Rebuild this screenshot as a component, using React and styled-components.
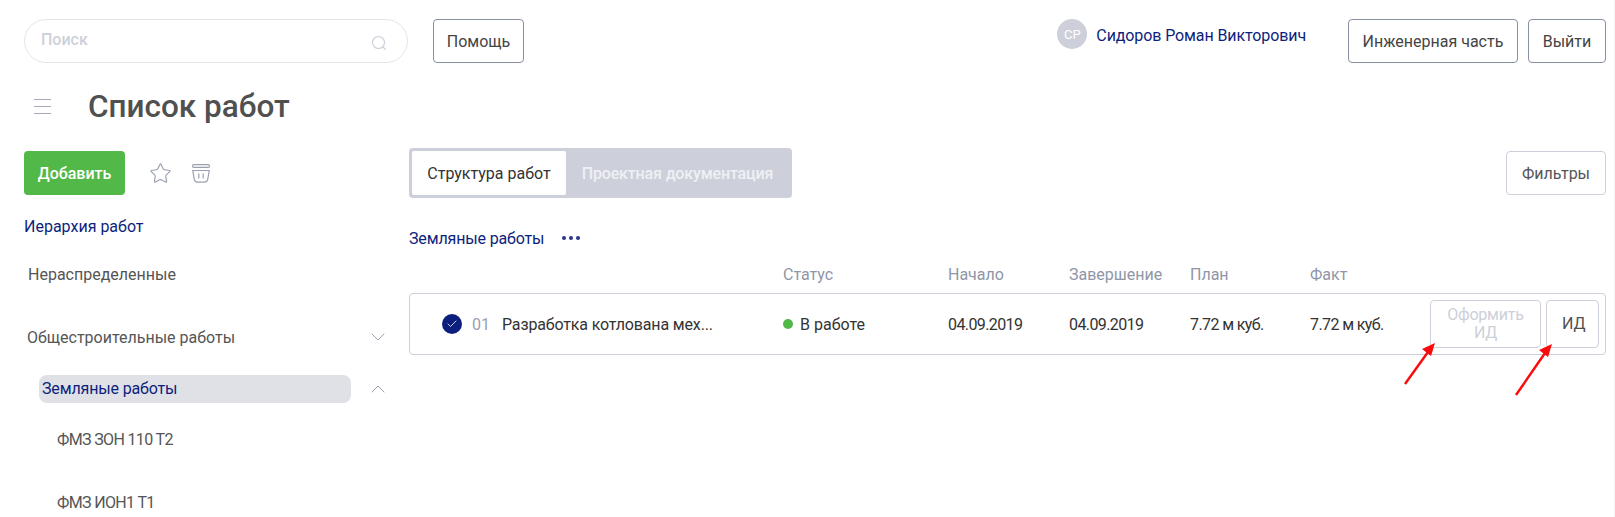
import React from 'react';
import styled, { createGlobalStyle } from 'styled-components';
import { Star, ChevronDown, ChevronUp, Check } from 'lucide-react';

const GlobalStyle = createGlobalStyle`
	html, body {
		margin: 0;
		background: #fff;
		overflow: hidden;
	}
	* {
		box-sizing: border-box;
	}
	#root {
		font-family: 'Roboto', 'Liberation Sans', sans-serif;
		font-size: 16px;
		color: #333;
	}
`;

const columns = [
	{ title: 'Статус', width: 165 },
	{ title: 'Начало', width: 121 },
	{ title: 'Завершение', width: 121 },
	{ title: 'План', width: 120 },
	{ title: 'Факт', width: 0 },
];

const App = () => {
	return (
		<Page>
			<GlobalStyle />
			<Header>
				<SearchBox>
					<SearchHint>Поиск</SearchHint>
					<svg width="16" height="16" viewBox="0 0 16 16" fill="none" stroke="#cdd0da" strokeWidth="1.2">
						<circle cx="7.5" cy="7.5" r="6" />
						<path d="M12 12l2.5 2.5" />
					</svg>
				</SearchBox>
				<Button $width={91}>Помощь</Button>
				<User>
					<Avatar>СР</Avatar>
					<UserName>Сидоров Роман Викторович</UserName>
				</User>
				<Button $width={170}>Инженерная часть</Button>
				<Button $width={78}>Выйти</Button>
			</Header>

			<TitleRow>
				<Burger>
					<BurgerLine />
					<BurgerLine />
					<BurgerLine />
				</Burger>
				<Title>Список работ</Title>
			</TitleRow>

			<Body>
				<Sidebar>
					<Actions>
						<AddButton>Добавить</AddButton>
						<Star size={23} color="#9aa0b0" strokeWidth={1.2} />
						<svg width="18" height="19" viewBox="0 0 18 19" fill="none" stroke="#9aa0b0" strokeWidth="1.2">
							<rect x="0.6" y="0.6" width="16.8" height="2.8" rx="1.2" />
							<path d="M0.8 6.5h16.4l-1.3 8.2c-.3 2-1.6 3.4-3.6 3.4H5.7c-2 0-3.3-1.4-3.6-3.4z" />
							<path d="M6.8 9.5v5M11.2 9.5v5" />
						</svg>
					</Actions>
					<HierarchyLink>Иерархия работ</HierarchyLink>
					<TreeItem $top={28} $left={4}>Нераспределенные</TreeItem>
					<TreeGroup>
						<span>Общестроительные работы</span>
						<ChevronDown size={24} color="#9aa0b0" strokeWidth={1} />
					</TreeGroup>
					<TreeSelectedRow>
						<TreeSelected>Земляные работы</TreeSelected>
						<ChevronUp size={24} color="#9aa0b0" strokeWidth={1} />
					</TreeSelectedRow>
					<TreeCode $top={27}>ФМЗ ЗОН 110 Т2</TreeCode>
					<TreeCode $top={43}>ФМЗ ИОН1 Т1</TreeCode>
				</Sidebar>

				<Main>
					<Toolbar>
						<Tabs>
							<Tab $active>Структура работ</Tab>
							<Tab>Проектная документация</Tab>
						</Tabs>
						<FilterButton>Фильтры</FilterButton>
					</Toolbar>
					<Crumbs>
						<span>Земляные работы</span>
						<Dots>
							<Dot />
							<Dot />
							<Dot />
						</Dots>
					</Crumbs>
					<ColumnHeads>
						{columns.map((col) => (
							<ColumnHead key={col.title} $width={col.width}>
								{col.title}
							</ColumnHead>
						))}
					</ColumnHeads>
					<WorkRow>
						<CheckMark>
							<Check size={12} color="#fff" strokeWidth={1.6} />
						</CheckMark>
						<WorkNumber>01</WorkNumber>
						<WorkName>Разработка котлована мех...</WorkName>
						<Status>
							<StatusDot />В работе
						</Status>
						<Cell $width={121}>04.09.2019</Cell>
						<Cell $width={121}>04.09.2019</Cell>
						<Cell $width={120}>7.72 м куб.</Cell>
						<Cell $width={115}>7.72 м куб.</Cell>
						<RowButton $width={111} disabled>
							Оформить ИД
						</RowButton>
						<RowButton $width={53}>ИД</RowButton>
					</WorkRow>
				</Main>
			</Body>

			<Arrows width="1615" height="517" viewBox="0 0 1615 517" fill="none">
				<path d="M1405 384L1428 352" stroke="#fa0a0a" strokeWidth="2.4" />
				<path d="M1435 343l-13 6 9 7z" fill="#fa0a0a" />
				<path d="M1516 395L1545 353" stroke="#fa0a0a" strokeWidth="2.4" />
				<path d="M1552 344l-13 6 9 7z" fill="#fa0a0a" />
			</Arrows>
		</Page>
	);
};

export default App;

const Page = styled.div`
	border-right: 1px solid #f1f1f1;
	height: 517px;
	overflow: hidden;
	position: relative;
	width: 1615px;
`;

const Header = styled.header`
	align-items: flex-start;
	display: flex;
	gap: 10px;
	padding: 19px 8px 0 24px;
`;

const SearchBox = styled.div`
	align-items: center;
	border: 1px solid #e3e5ea;
	border-radius: 22px;
	display: flex;
	height: 44px;
	justify-content: space-between;
	margin-right: 15px;
	padding: 0 20px 0 16px;
	width: 384px;

	svg {
		margin-top: 3px;
	}
`;

const SearchHint = styled.span`
	color: #cdd0da;
	font-weight: 500;
	margin-top: -4px;
`;

const Button = styled.button`
	background: #fff;
	border: 1px solid #8a90a3;
	border-radius: 4px;
	color: #444;
	font-family: inherit;
	font-size: 16px;
	height: 44px;
	padding: 0;
	width: ${(props) => props.$width}px;
`;

const User = styled.div`
	align-items: flex-start;
	display: flex;
	gap: 9px;
	margin-left: auto;
	margin-right: 32px;
`;

const Avatar = styled.div`
	align-items: center;
	background: #cdd0da;
	border-radius: 50%;
	color: #fff;
	display: flex;
	font-size: 13px;
	height: 30px;
	justify-content: center;
	width: 30px;
`;

const UserName = styled.span`
	color: #0d1f7c;
	height: 30px;
	letter-spacing: -0.1px;
	line-height: 36px;
	margin-top: -1px;
`;

const TitleRow = styled.div`
	align-items: center;
	display: flex;
	height: 44px;
	margin-top: 21px;
	padding-left: 34px;
`;

const Burger = styled.div`
	display: flex;
	flex-direction: column;
	gap: 6px;
	margin-right: 37px;
	width: 17px;
`;

const BurgerLine = styled.span`
	background: #a5aaba;
	height: 1px;
`;

const Title = styled.h1`
	color: #505050;
	font-size: 31.5px;
	font-weight: 500;
	margin: 0;
`;

const Body = styled.div`
	display: grid;
	gap: 19px;
	grid-template-columns: 366px 1197px;
	margin-top: 23px;
	padding-left: 24px;
`;

const Sidebar = styled.aside`
	display: flex;
	flex-direction: column;
`;

const Actions = styled.div`
	align-items: center;
	display: flex;
	gap: 20px;
`;

const AddButton = styled.button`
	background: #52b848;
	border: none;
	border-radius: 4px;
	color: #fff;
	font-family: inherit;
	font-size: 16px;
	font-weight: 500;
	height: 44px;
	margin-right: 4px;
	padding: 0;
	width: 101px;
`;

const HierarchyLink = styled.div`
	color: #0d1f7c;
	line-height: 20px;
	margin-top: 22px;
`;

const TreeItem = styled.div`
	color: #555;
	line-height: 20px;
	margin-left: ${(props) => props.$left}px;
	margin-top: ${(props) => props.$top}px;
`;

const TreeCode = styled.div`
	color: #555;
	letter-spacing: -0.65px;
	line-height: 20px;
	margin-left: 33px;
	margin-top: ${(props) => props.$top}px;
`;

const TreeGroup = styled.div`
	align-items: center;
	color: #555;
	display: flex;
	height: 20px;
	justify-content: space-between;
	margin-left: 3px;
	margin-top: 42px;
`;

const TreeSelectedRow = styled.div`
	align-items: center;
	display: flex;
	justify-content: space-between;
	margin-left: 15px;
	margin-top: 28px;
`;

const TreeSelected = styled.div`
	background: #e0e1e6;
	border-radius: 8px;
	color: #0d1f7c;
	height: 28px;
	letter-spacing: -0.15px;
	line-height: 28px;
	padding-left: 3px;
	width: 312px;
`;

const Main = styled.main`
	display: flex;
	flex-direction: column;
`;

const Toolbar = styled.div`
	align-items: flex-start;
	display: flex;
	justify-content: space-between;
	margin-top: -3px;
`;

const Tabs = styled.div`
	background: #cdd0da;
	border-radius: 4px;
	display: flex;
	padding: 3px;
	width: 383px;
`;

const Tab = styled.div`
	align-items: center;
	background: ${(props) => (props.$active ? '#fff' : 'transparent')};
	border-radius: 2px;
	color: ${(props) => (props.$active ? '#333' : '#eef0f4')};
	display: flex;
	font-weight: ${(props) => (props.$active ? 400 : 500)};
	height: 44px;
	justify-content: center;
	letter-spacing: ${(props) => (props.$active ? 0 : '-0.15px')};
	width: ${(props) => (props.$active ? '154px' : '223px')};
`;

const FilterButton = styled.button`
	background: #fff;
	border: 1px solid #cdd0da;
	border-radius: 4px;
	color: #555;
	font-family: inherit;
	font-size: 16px;
	height: 44px;
	margin-top: 3px;
	padding: 0;
	width: 100px;
`;

const Crumbs = styled.div`
	align-items: center;
	color: #0d1f7c;
	display: flex;
	gap: 18px;
	height: 20px;
	letter-spacing: -0.15px;
	margin-top: 30px;
`;

const Dots = styled.div`
	display: flex;
	gap: 3px;
`;

const Dot = styled.span`
	background: #2a3590;
	border-radius: 50%;
	height: 4px;
	width: 4px;
`;

const ColumnHeads = styled.div`
	color: #8f96a8;
	display: flex;
	line-height: 20px;
	margin-top: 17px;
	padding-left: 374px;
`;

const ColumnHead = styled.div`
	flex: none;
	width: ${(props) => props.$width || 60}px;
`;

const WorkRow = styled.div`
	align-items: center;
	border: 1px solid #cdd0da;
	border-radius: 4px;
	display: flex;
	height: 62px;
	margin-top: 8px;
	padding: 0 6px 0 32px;
`;

const CheckMark = styled.div`
	align-items: center;
	background: #0d1f7c;
	border-radius: 50%;
	display: flex;
	flex: none;
	height: 20px;
	justify-content: center;
	margin-right: 10px;
	width: 20px;
`;

const WorkNumber = styled.span`
	color: #9aa0b0;
	flex: none;
	width: 30px;
`;

const WorkName = styled.span`
	flex: none;
	letter-spacing: -0.15px;
	width: 281px;
	white-space: nowrap;
`;

const Status = styled.span`
	align-items: center;
	display: flex;
	flex: none;
	gap: 7px;
	width: 165px;
`;

const StatusDot = styled.span`
	background: #52b848;
	border-radius: 50%;
	height: 10px;
	width: 10px;
`;

const Cell = styled.span`
	flex: none;
	letter-spacing: -0.6px;
	width: ${(props) => props.$width}px;
`;

const RowButton = styled.button`
	background: #fff;
	border: 1px solid #cdd0da;
	border-radius: 4px;
	color: ${(props) => (props.disabled ? '#cdd0da' : '#505050')};
	flex: none;
	font-family: inherit;
	font-size: 16px;
	height: 48px;
	letter-spacing: -0.2px;
	line-height: 18px;
	margin-left: 5px;
	padding: 0 15px;
	width: ${(props) => props.$width}px;
`;

const Arrows = styled.svg`
	left: 0;
	pointer-events: none;
	position: absolute;
	top: 0;
`;
